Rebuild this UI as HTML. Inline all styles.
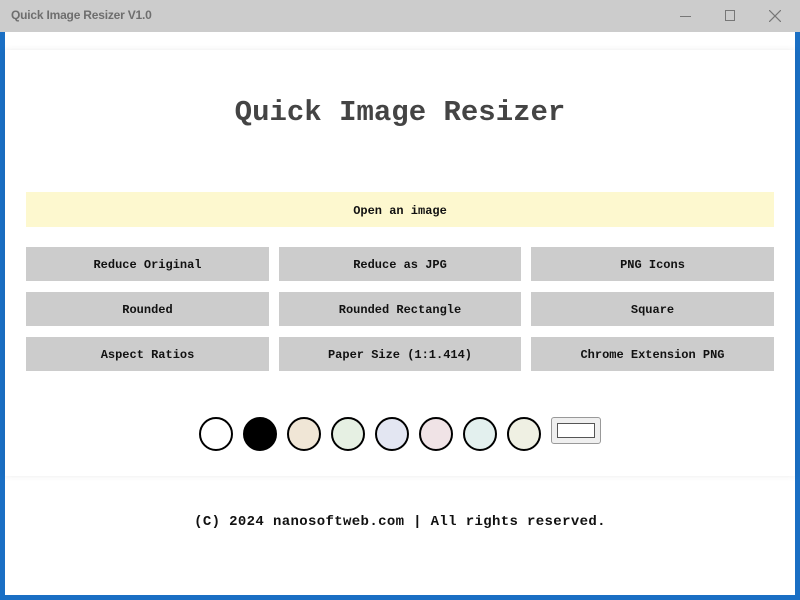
<!DOCTYPE html>
<html><head><style>
*{margin:0;padding:0;box-sizing:border-box}
body{width:800px;height:600px;overflow:hidden;background:#fff;position:relative;font-family:"Liberation Mono",monospace}
.tb{position:absolute;left:0;top:0;width:800px;height:32px;background:#cccccc}
.tt{position:absolute;left:11px;top:8px;font:bold 12px "Liberation Sans",sans-serif;color:#6e6e6e;letter-spacing:-0.2px}
.bl{position:absolute;background:#1a6fc4}
.card{position:absolute;left:5px;top:50px;width:790px;height:426px;background:#fff;box-shadow:0 0 6px rgba(0,0,0,0.08)}
h1{position:absolute;left:0;width:800px;top:96px;text-align:center;font:bold 29px "Liberation Mono",monospace;color:#444}
.btn{position:absolute;height:34px;padding-top:2px;background:#cccccc;font:bold 12px "Liberation Mono",monospace;color:#111;display:flex;align-items:center;justify-content:center}
.c{position:absolute;top:417px;width:34px;height:34px;border:2.5px solid #000;border-radius:50%}
</style></head><body>
<div class="tb"><div class="tt">Quick Image Resizer V1.0</div>
<div style="position:absolute;left:680px;top:16px;width:11px;height:1px;background:#777"></div>
<div style="position:absolute;left:725px;top:10px;width:10px;height:11px;border:1px solid #777"></div>
<svg style="position:absolute;left:769px;top:10px" width="12" height="12"><path d="M0 0L12 12M12 0L0 12" stroke="#777" stroke-width="1.2"/></svg>
</div>
<div class="bl" style="left:0;top:32px;width:5px;height:568px"></div>
<div class="bl" style="left:795px;top:32px;width:5px;height:568px"></div>
<div class="bl" style="left:0;top:595px;width:800px;height:5px"></div>
<div class="card"></div>
<h1>Quick Image Resizer</h1>
<div class="btn" style="left:26px;top:192px;width:748px;height:35px;background:#fdf8cf">Open an image</div>
<div class="btn" style="left:26px;top:247px;width:243px">Reduce Original</div>
<div class="btn" style="left:279px;top:247px;width:242px">Reduce as JPG</div>
<div class="btn" style="left:531px;top:247px;width:243px">PNG Icons</div>
<div class="btn" style="left:26px;top:292px;width:243px">Rounded</div>
<div class="btn" style="left:279px;top:292px;width:242px">Rounded Rectangle</div>
<div class="btn" style="left:531px;top:292px;width:243px">Square</div>
<div class="btn" style="left:26px;top:337px;width:243px">Aspect Ratios</div>
<div class="btn" style="left:279px;top:337px;width:242px">Paper Size (1:1.414)</div>
<div class="btn" style="left:531px;top:337px;width:243px">Chrome Extension PNG</div>
<div class="c" style="left:199px;background:#fff"></div>
<div class="c" style="left:243px;background:#000"></div>
<div class="c" style="left:287px;background:#f0e6d6"></div>
<div class="c" style="left:331px;background:#e6f0e3"></div>
<div class="c" style="left:375px;background:#e3e6f2"></div>
<div class="c" style="left:419px;background:#f0e3e6"></div>
<div class="c" style="left:463px;background:#e3f0ee"></div>
<div class="c" style="left:507px;background:#eff0e3"></div>
<div style="position:absolute;left:551px;top:417px;width:50px;height:27px;background:#efefef;border:1px solid #999;border-radius:3px"><div style="position:absolute;left:5px;top:5px;width:38px;height:15px;border:1px solid #555;background:#fff"></div></div>
<div style="position:absolute;left:0;width:800px;top:514px;text-align:center;font:bold 14px 'Liberation Mono',monospace;color:#111;letter-spacing:0.36px">(C) 2024 nanosoftweb.com | All rights reserved.</div>
</body></html>
